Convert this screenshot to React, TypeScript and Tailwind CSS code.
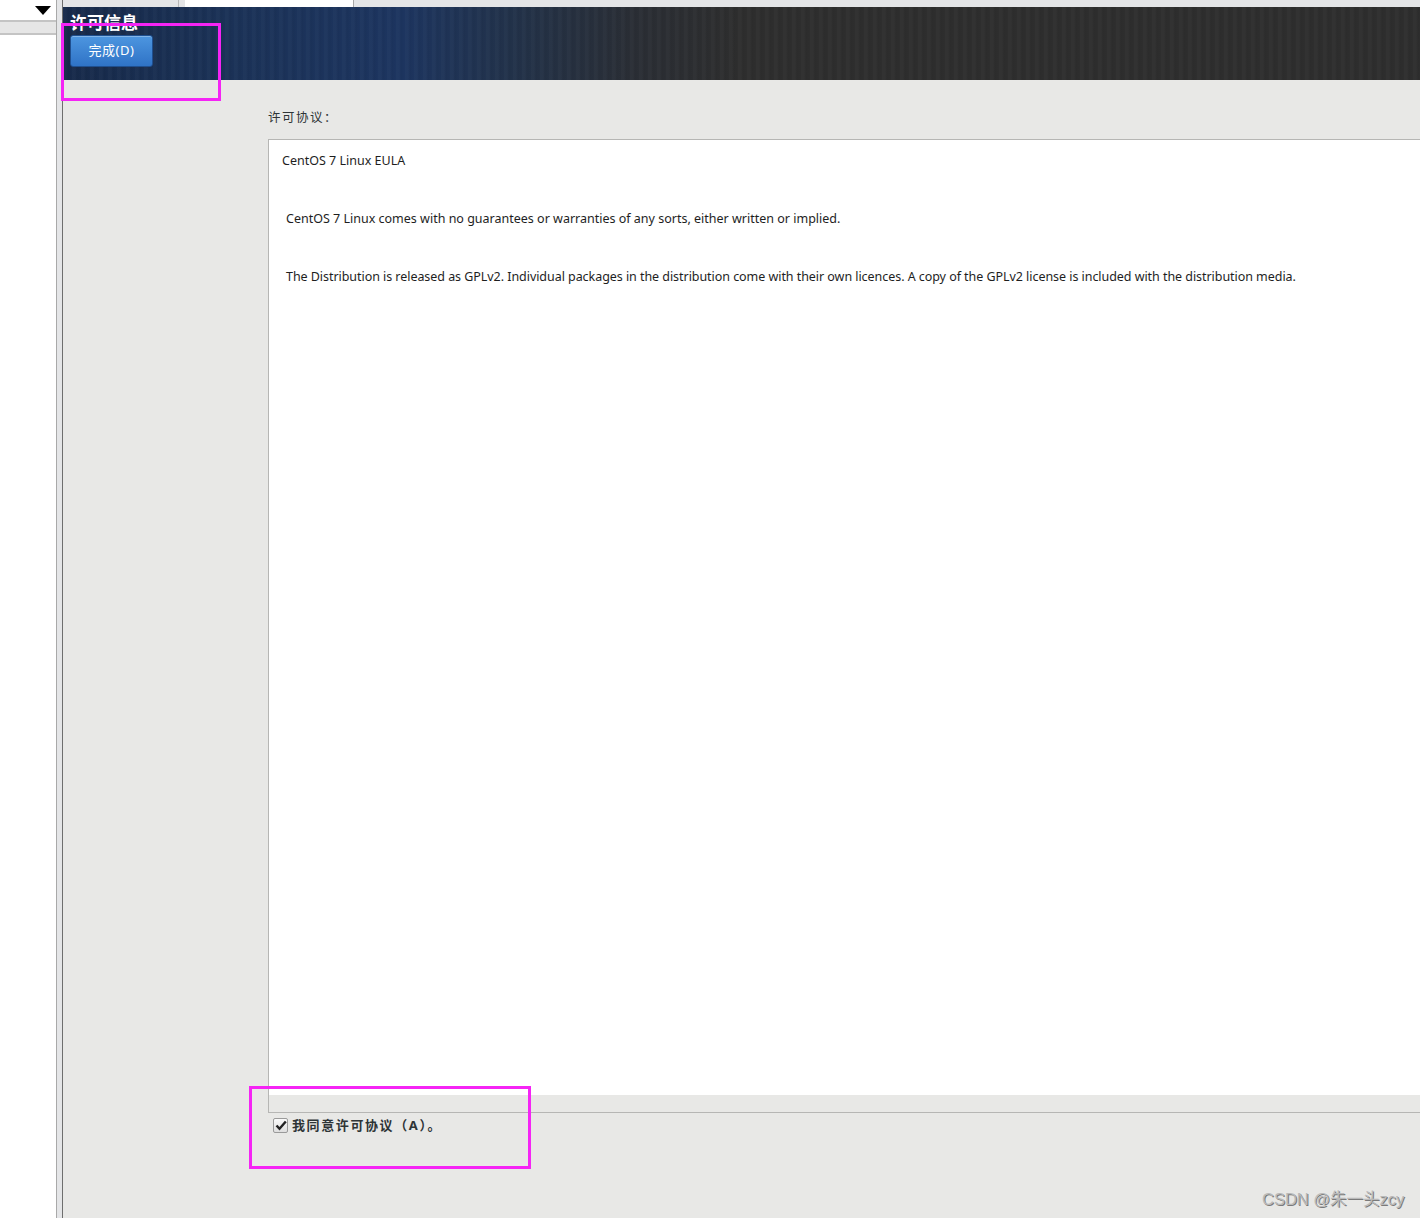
import React from "react";

const FONT = { fontFamily: '"Noto Sans", "Noto Sans CJK SC", sans-serif' };

function Triangle() {
  return (
    <svg width="16" height="9" viewBox="0 0 16 9">
      <path d="M0 0 H16 L8 9 Z" fill="#000" />
    </svg>
  );
}

function Check() {
  return (
    <svg width="12" height="11" viewBox="0 0 12 11">
      <path d="M1.5 5.5 L4.5 8.8 L10.8 1.5" fill="none" stroke="#222" strokeWidth="2.4" />
    </svg>
  );
}

export default function App() {
  return (
    <div className="relative flex h-[1218px] w-[1420px] overflow-hidden bg-[#e8e8e6] text-[#2e3436]" style={FONT}>
      {/* left pane */}
      <div className="flex w-[57px] shrink-0 flex-col border-r border-[#a9a9a9] bg-white">
        <div className="flex h-[20px] items-center justify-end pr-[5px]">
          <Triangle />
        </div>
        <div className="h-[15px] border-y-2 border-[#c4c4c4] bg-[#e6e6e6]" />
        <div className="flex-1" />
      </div>
      <div className="w-[6px] shrink-0 border-r border-[#6e6e6e] bg-[#e4e5e7]" />

      {/* main */}
      <div className="flex min-w-0 flex-1 flex-col">
        <div className="flex h-[7px] bg-[#e4e5e7]">
          <div className="ml-[115px] w-[7px] border-l border-[#b8b8b8]" />
          <div className="w-[169px] border-r border-[#a8a8a8] bg-white" />
        </div>
        <div className="relative h-[73px] bg-[linear-gradient(90deg,#172a4a_0%,#1b3257_12%,#1d3560_25%,#22324a_33%,#2a2e35_42%,#2e2e2e_50%,#2e2e2e_100%)]">
          <div className="absolute inset-0 bg-[repeating-linear-gradient(90deg,rgba(255,255,255,0.02)_0px,rgba(255,255,255,0.02)_3px,rgba(0,0,0,0.04)_5px,rgba(0,0,0,0)_9px)]" />
          <div className="relative pl-[7px]">
            <div className="pt-[5px] text-[17px] font-bold leading-[22px] text-white">许可信息</div>
            <button className="mt-[1px] flex h-[32px] w-[83px] items-center justify-center rounded-[3px] border border-[#1f4f8f] bg-[linear-gradient(180deg,#4d96e0,#2f73c6)] text-[13px] tracking-[0.5px] text-white shadow-[inset_0_1px_0_rgba(255,255,255,0.3)]">
              完成(D)
            </button>
          </div>
        </div>

        <div className="flex flex-1 flex-col pl-[205px]">
          <div className="pt-[30px] text-[12.5px] leading-[16px] tracking-[1.5px] text-[#2e3436]">许可协议：</div>
          <div className="mt-[13px] flex h-[974px] flex-col border-l border-t border-b border-[#b6b6b4]">
            <div className="flex-1 bg-white pl-[13px] pt-[11px] text-[12.5px] leading-[19.3px] text-[#1e1e1e]">
              <div>CentOS 7 Linux EULA</div>
              <div>&nbsp;</div>
              <div>&nbsp;</div>
              <div className="pl-[4px]">CentOS 7 Linux comes with no guarantees or warranties of any sorts, either written or implied.</div>
              <div>&nbsp;</div>
              <div>&nbsp;</div>
              <div className="pl-[4px] tracking-[-0.05px]">
                The Distribution is released as GPLv2. Individual packages in the distribution come with their own licences. A copy of the GPLv2 license is included with the distribution media.
              </div>
            </div>
            <div className="h-[17px] bg-[#e8e8e6]" />
          </div>
          <div className="mt-[4px] flex items-center gap-[4px] pl-[5px]">
            <div className="flex h-[15px] w-[15px] items-center justify-center rounded-[2px] border border-[#9a9a9a] bg-[linear-gradient(180deg,#fafafa,#dedede)]">
              <Check />
            </div>
            <span className="text-[13px] font-bold leading-[16px] tracking-[1.6px] text-[#2e3436]">我同意许可协议（A）。</span>
          </div>
        </div>
      </div>

      {/* annotations */}
      <div className="absolute left-[61px] top-[23px] h-[78px] w-[160px] border-[3px] border-[#f524f5]" />
      <div className="absolute left-[249px] top-[1086px] h-[83px] w-[282px] border-[3px] border-[#f524f5]" />
      <div
        className="absolute left-[1262px] top-[1187px] text-[16.5px] text-[#b9b9b9] [text-shadow:1px_1px_0_#7a7a7a]"
        style={{ fontFamily: '"Liberation Sans", "Noto Sans CJK SC", sans-serif' }}
      >
        CSDN @朱一头zcy
      </div>
    </div>
  );
}
